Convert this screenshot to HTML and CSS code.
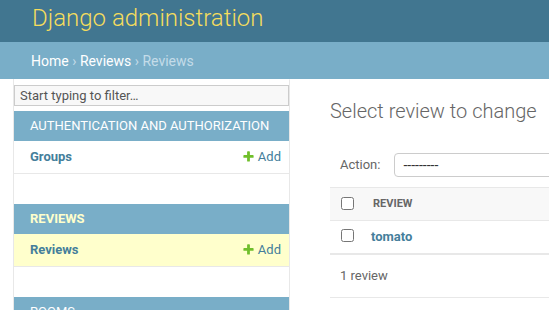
FILE: index.html
```html
<!DOCTYPE html>
<html lang="en">
<head>
<meta charset="utf-8">
<title>Select review to change | Django site admin</title>
<link rel="stylesheet" href="styles.css">
</head>
<body>
<div class="header">
  <div class="branding">Django administration</div>
</div>
<div class="breadcrumbs"><a href="#">Home</a><span class="sep">›</span><a href="#">Reviews</a><span class="sep">›</span><span class="current">Reviews</span></div>
<div class="main">
  <div class="toggle-nav"></div>
  <nav class="sidebar">
    <input class="nav-filter" type="search" placeholder="Start typing to filter…">
    <div class="module">
      <div class="caption">Authentication and Authorization</div>
      <div class="model-row">
        <a class="model" href="#">Groups</a>
        <a class="addlink" href="#"><svg class="add-icon" width="13" height="13" viewBox="0 0 1792 1792"><path fill="#70bf2b" d="M1600 796v192q0 40-28 68t-68 28h-416v416q0 40-28 68t-68 28h-192q-40 0-68-28t-28-68v-416h-416q-40 0-68-28t-28-68v-192q0-40 28-68t68-28h416v-416q0-40 28-68t68-28h192q40 0 68 28t28 68v416h416q40 0 68 28t28 68z"/></svg>Add</a>
      </div>
    </div>
    <div class="module current-app">
      <div class="caption">Reviews</div>
      <div class="model-row current-model">
        <a class="model" href="#">Reviews</a>
        <a class="addlink" href="#"><svg class="add-icon" width="13" height="13" viewBox="0 0 1792 1792"><path fill="#70bf2b" d="M1600 796v192q0 40-28 68t-68 28h-416v416q0 40-28 68t-68 28h-192q-40 0-68-28t-28-68v-416h-416q-40 0-68-28t-28-68v-192q0-40 28-68t68-28h416v-416q0-40 28-68t68-28h192q40 0 68 28t28 68v416h416q40 0 68 28t28 68z"/></svg>Add</a>
      </div>
    </div>
    <div class="module">
      <div class="caption">Rooms</div>
      <div class="model-row">
        <a class="model" href="#">Rooms</a>
      </div>
    </div>
  </nav>
  <div class="content">
    <h1>Select review to change</h1>
    <div class="actions">
      <label class="action-label">Action:</label>
      <select class="action-select">
        <option>---------</option>
        <option>Delete selected reviews</option>
      </select>
    </div>
    <div class="results">
      <div class="results-head">
        <div class="cell-check"><input type="checkbox" class="checkbox"></div>
        <div class="head-text">Review</div>
      </div>
      <div class="results-row">
        <div class="cell-check"><input type="checkbox" class="checkbox"></div>
        <a class="row-link" href="#">tomato</a>
      </div>
    </div>
    <p class="paginator">1 review</p>
  </div>
</div>
</body>
</html>
```

FILE: styles.css
```css
* {
  box-sizing: border-box;
}

html, body {
  margin: 0;
  padding: 0;
}

body {
  width: 549px;
  height: 310px;
  overflow: hidden;
  font-family: Roboto, "Liberation Sans", sans-serif;
  font-size: 13px;
  color: #333;
  background: #fff;
}

a {
  text-decoration: none;
  color: #447e9b;
}

.header {
  height: 42px;
  background: #417690;
  padding: 4px 32px 0;
}

.branding {
  font-size: 24px;
  font-weight: 300;
  line-height: 28px;
  color: #f5dd5d;
  white-space: nowrap;
}

.breadcrumbs {
  height: 37px;
  background: #79aec8;
  padding: 0 31px;
  display: flex;
  align-items: center;
  font-size: 14px;
  color: #c4dce8;
  white-space: nowrap;
}

.breadcrumbs a {
  color: #fff;
}

.breadcrumbs .sep {
  margin: 0 3.5px;
}

.main {
  display: flex;
  align-items: flex-start;
  width: 1000px;
}

.toggle-nav {
  flex: 0 0 14px;
  align-self: stretch;
  height: 240px;
  border-right: 1px solid #e8e8e8;
}

.sidebar {
  flex: 0 0 276px;
  width: 276px;
  min-width: 0;
  overflow: hidden;
  border-top: 1px solid transparent;
  border-right: 1px solid #e8e8e8;
  min-height: 240px;
}

.nav-filter {
  display: block;
  width: 100%;
  margin: 5px 0;
  padding: 2px 5px;
  height: 21px;
  border: 1px solid #ccc;
  background: #f8f8f8;
  font-family: Roboto, "Liberation Sans", sans-serif;
  font-size: 13px;
  line-height: 15px;
  color: #333;
  border-radius: 0;
  outline: none;
  -webkit-appearance: none;
  appearance: none;
}

.nav-filter::placeholder {
  color: #555;
}

.module {
  margin-bottom: 30px;
}

.caption {
  background: #79aec8;
  color: #fff;
  padding: 8px 8px 8px 16px;
  line-height: 14px;
  font-size: 13px;
  letter-spacing: 0;
  text-transform: uppercase;
  white-space: nowrap;
}

.current-app .caption {
  color: #ffc;
  font-weight: bold;
}

.model-row {
  display: flex;
  justify-content: space-between;
  padding: 8px 8px 8px 16px;
  line-height: 16px;
  border-bottom: 1px solid #e8e8e8;
}

.current-model {
  background: #ffc;
}

.model {
  font-weight: bold;
}

.addlink {
  display: flex;
  align-items: flex-start;
}

.add-icon {
  margin: 1px 3px 0 0;
}

.content {
  flex: 0 0 600px;
  padding: 20px 40px;
}

h1 {
  margin: 0 0 20px;
  font-size: 20px;
  font-weight: 300;
  line-height: 24px;
  color: #666;
  white-space: nowrap;
}

.actions {
  display: flex;
  align-items: center;
  padding: 10px;
  line-height: 24px;
  color: #666;
}

.action-label {
  font-size: 13px;
}

.action-select {
  margin-left: 14px;
  height: 24px;
  padding: 0 0 0 4px;
  border: 1px solid #ccc;
  border-radius: 4px;
  background: #fff;
  font-family: Roboto, "Liberation Sans", sans-serif;
  font-size: 14px;
  color: #333;
  width: 220px;
}

.results {
  width: 100%;
}

.results-head {
  display: flex;
  background: #f8f8f8;
  border-top: 1px solid #e8e8e8;
  border-bottom: 1px solid #e8e8e8;
}

.results-row {
  display: flex;
  border-bottom: 1px solid #e8e8e8;
}

.cell-check {
  flex: 0 0 33px;
  display: flex;
  justify-content: center;
  padding: 8px 0 8px 2px;
  line-height: 16px;
}

.checkbox {
  margin: 1px 0 0;
  width: 13px;
  height: 13px;
}

.results-row .checkbox {
  margin-top: 0;
}

.head-text {
  padding: 8px 10px;
  line-height: 16px;
  font-size: 11px;
  font-weight: bold;
  color: #666;
  text-transform: uppercase;
}

.row-link {
  padding: 8px;
  line-height: 16px;
  font-weight: bold;
  font-size: 13px;
}

.paginator {
  margin: 0;
  padding: 10px;
  line-height: 22px;
  font-size: 13px;
  color: #666;
  border-top: 1px solid #e8e8e8;
  border-bottom: 1px solid #e8e8e8;
}
```
